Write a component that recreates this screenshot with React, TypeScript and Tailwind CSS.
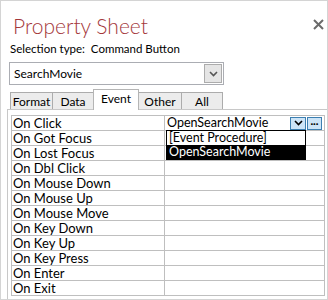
import React from "react";

const rows = [
  "On Click",
  "On Got Focus",
  "On Lost Focus",
  "On Dbl Click",
  "On Mouse Down",
  "On Mouse Up",
  "On Mouse Move",
  "On Key Down",
  "On Key Up",
  "On Key Press",
  "On Enter",
  "On Exit",
];

const tabs = [
  { name: "Format", w: "w-[43px]" },
  { name: "Data", w: "w-[42px]" },
  { name: "Event", w: "w-[46px]" },
  { name: "Other", w: "w-[44px]" },
  { name: "All", w: "w-[42px]" },
];

function Chevron({ className }: { className?: string }) {
  return (
    <svg width="9" height="6" viewBox="0 0 9 6" className={className}>
      <path d="M1 1 L4.5 4.5 L8 1" fill="none" stroke="currentColor" strokeWidth="1.6" />
    </svg>
  );
}

export default function App() {
  return (
    <div className="w-[328px] h-[300px] bg-white border border-[#d4d4d4] flex flex-col overflow-hidden font-['Lato',sans-serif] text-black">
      {/* title */}
      <div className="h-[39px] flex items-start justify-between pl-[12px] pr-[3px] pt-[11px]">
        <div className="text-[21px] leading-[28px] font-light text-[#a4373a]">Property Sheet</div>
        <svg width="11" height="11" viewBox="0 0 11 11" className="mt-[7px] text-[#6b6b6b]">
          <path d="M1 1 L10 10 M10 1 L1 10" stroke="currentColor" strokeWidth="2" />
        </svg>
      </div>
      {/* selection type */}
      <div className="h-[20px] pl-[9px] text-[11.5px] leading-[18px] whitespace-pre">Selection type:  Command Button</div>
      {/* combo */}
      <div className="mt-[2px] ml-[8px] w-[215px] h-[23px] border border-[#abadb3] flex items-center">
        <div className="flex-1 pl-[4px] text-[12px] leading-[20px]">SearchMovie</div>
        <div className="w-[18px] h-[19px] mr-[1px] bg-[#e5e5e5] border border-[#acacac] flex items-center justify-center text-[#555]">
          <Chevron />
        </div>
      </div>
      {/* tabs */}
      <div className="mt-[4px] ml-[9px] h-[21px] flex items-end">
        {tabs.map((t) =>
          t.name === "Event" ? (
            <div
              key={t.name}
              className={`${t.w} h-[21px] relative z-10 bg-white border-t border-l border-r border-[#b5b5b5] -ml-[1px] text-[12px] leading-[18px] text-center`}
            >
              {t.name}
            </div>
          ) : (
            <div
              key={t.name}
              className={`${t.w} h-[18px] bg-[#ececec] border border-[#acacac] -ml-[1px] first:ml-0 text-[12px] leading-[17px] text-center`}
            >
              {t.name}
            </div>
          )
        )}
      </div>
      {/* panel */}
      <div className="-mt-[1px] ml-[6px] flex-1 border-t border-l border-[#c8c8c8] pl-[3px] pt-[5px] pr-[2px]">
        <div className="border-t border-l border-r border-[#bfbfbf]">
          {rows.map((r, i) => (
            <div key={r} className="h-[15px] flex border-b border-[#bfbfbf] text-[13px] leading-[14px]">
              <div className="w-[153px] border-r border-[#bfbfbf] pl-[1px] whitespace-nowrap">{r}</div>
              <div className="flex-1 relative">
                {i === 0 && (
                  <>
                    <div className="flex h-[14px] items-center">
                      <div className="flex-1 pl-[2px] leading-[14px] text-[12.5px]">OpenSearchMovie</div>
                      <div className="w-[16px] h-[13px] bg-[#cce4f7] border border-[#3c7fb1] flex items-center justify-center mr-[1px]">
                        <Chevron />
                      </div>
                      <div className="w-[15px] h-[13px] bg-[#cce4f7] border border-[#3c7fb1] flex items-center justify-center mr-[2px] text-[10px] font-bold leading-[8px]">
                        ···
                      </div>
                    </div>
                    <div className="absolute z-20 left-[1px] top-[14px] w-[140px] border border-black bg-white text-[12.5px]">
                      <div className="h-[14px] pl-[2px] leading-[14px] whitespace-nowrap">[Event Procedure]</div>
                      <div className="h-[14px] pl-[2px] leading-[14px] bg-black text-white whitespace-nowrap">OpenSearchMovie</div>
                    </div>
                  </>
                )}
              </div>
            </div>
          ))}
        </div>
      </div>
    </div>
  );
}
